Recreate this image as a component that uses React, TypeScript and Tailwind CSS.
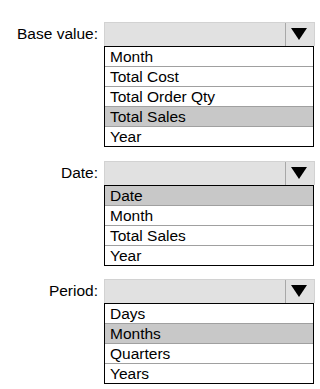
import React from "react";

type Section = { label: string; items: string[]; selected: number; mt: string };

const sections: Section[] = [
  { label: "Base value:", items: ["Month", "Total Cost", "Total Order Qty", "Total Sales", "Year"], selected: 3, mt: "mt-[22px]" },
  { label: "Date:", items: ["Date", "Month", "Total Sales", "Year"], selected: 0, mt: "mt-[14px]" },
  { label: "Period:", items: ["Days", "Months", "Quarters", "Years"], selected: 1, mt: "mt-[13px]" },
];

function Arrow() {
  return (
    <svg width="16" height="13" viewBox="0 0 16 13">
      <polygon points="0,0 16,0 8,12" fill="#000" />
    </svg>
  );
}

function Block({ s }: { s: Section }) {
  return (
    <div className={`flex ${s.mt}`}>
      <div className="w-[98px] h-[24px] flex items-center justify-end text-[15.5px] text-black leading-none">
        {s.label}
      </div>
      <div className="ml-[6px] flex flex-col">
        <div className="w-[211px] h-[24px] flex border border-b-0 border-[#d2d2d2] bg-[#e1e1e1]">
          <div className="flex-1" />
          <div className="w-[29px] h-full border-l border-[#a8a8a8] flex items-center justify-center pr-[3px]">
            <Arrow />
          </div>
        </div>
        <div className="w-[210px] border border-black bg-white flex flex-col">
          {s.items.map((it, i) => (
            <div
              key={it}
              className={`pl-[5px] text-[15.5px] leading-[19px] text-black ${
                i < s.items.length - 1 ? "h-[20px] border-b border-[#a0a0a0]" : "h-[19px]"
              } ${i === s.selected ? "bg-[#c8c8c8]" : ""}`}
            >
              {it}
            </div>
          ))}
        </div>
      </div>
    </div>
  );
}

export default function App() {
  return (
    <div
      className="w-[320px] h-[389px] bg-white overflow-hidden"
      style={{ fontFamily: '"Liberation Sans", Arial, sans-serif' }}
    >
      {sections.map((s) => (
        <Block key={s.label} s={s} />
      ))}
    </div>
  );
}
